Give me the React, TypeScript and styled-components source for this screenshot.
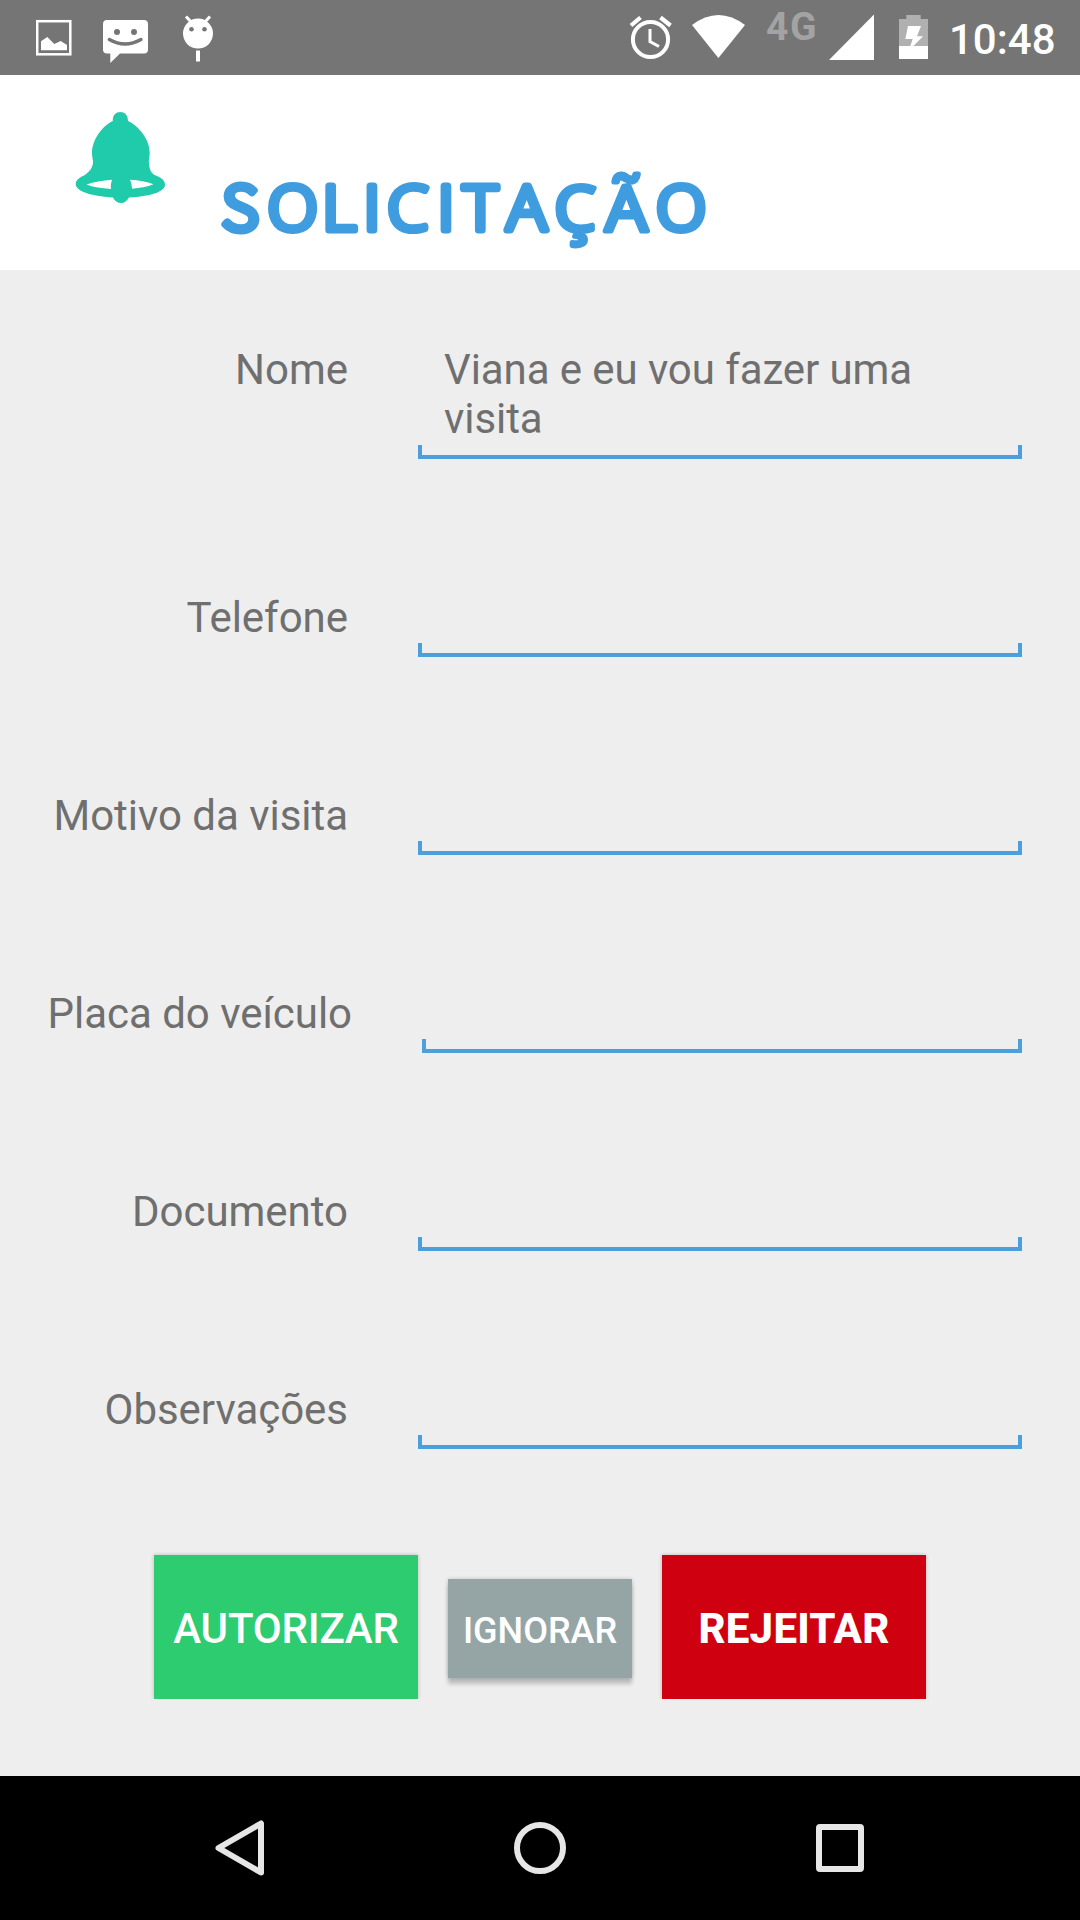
import React from "react";
import styled, { createGlobalStyle } from "styled-components";

const GlobalStyle = createGlobalStyle`
  * { box-sizing: border-box; }
  body { margin: 0; background: #eeeeee; font-family: Roboto, "Noto Sans", sans-serif; }
`;

const Screen = styled.div`
  display: flex;
  flex-direction: column;
  width: 1080px;
  height: 1920px;
  background: #eeeeee;
  overflow: hidden;
`;

const StatusBar = styled.div`
  display: flex;
  justify-content: space-between;
  height: 75px;
  padding: 0 26px 0 36px;
  background: #757575;
`;

const StatusGroup = styled.div`
  display: flex;
  align-items: flex-start;
`;

const StatusIcon = styled.svg<{ $gap?: number }>`
  display: block;
  flex: none;
  height: 75px;
  margin-left: ${(p) => p.$gap ?? 0}px;
`;

const Network = styled.span`
  width: 50px;
  margin: 5px 0 0 21px;
  color: #a3a3a3;
  font-size: 39px;
  font-weight: 700;
  line-height: 44px;
  letter-spacing: 1.5px;
  white-space: nowrap;
`;

const Clock = styled.span`
  width: 105px;
  margin: 15px 0 0 21px;
  color: #ffffff;
  font-size: 42px;
  font-weight: 500;
  line-height: 49px;
  white-space: nowrap;
`;

const Header = styled.header`
  display: flex;
  align-items: flex-start;
  height: 195px;
  padding: 35px 0 0 74px;
  background: #ffffff;
`;

const Bell = styled.svg`
  display: block;
  flex: none;
`;

const Title = styled.h1`
  margin: 45px 0 0 32px;
  height: 110px;
  svg { display: block; }
`;

const TitleText = styled.text`
  font-family: "Open Sans", sans-serif;
  font-size: 61.5px;
  font-weight: 300;
  fill: #3e9cdf;
  stroke: #3e9cdf;
  stroke-width: 7px;
  stroke-linejoin: round;
  stroke-linecap: round;
`;

const Initial = styled.tspan`
  font-family: "Noto Sans CJK JP", sans-serif;
  font-size: 60px;
`;

const Accented = styled.tspan`
  font-size: 63px;
  font-weight: 500;
  stroke-width: 5px;
`;

const Form = styled.main`
  display: flex;
  flex-direction: column;
  flex: 1;
  gap: 134px;
  padding-top: 75px;
`;

const Row = styled.div`
  display: flex;
  padding-right: 58px;
  color: #6f6f6f;
  font-size: 42px;
  line-height: 49px;
`;

const Label = styled.label<{ $width: number }>`
  flex: none;
  width: ${(p) => p.$width}px;
  letter-spacing: -0.03px;
  text-align: right;
  white-space: nowrap;
`;

const Field = styled.div`
  display: flex;
  flex-direction: column;
  flex: 1;
  gap: 1px;
  margin-left: 70px;
`;

const Value = styled.div`
  min-height: 49px;
  padding: 0 60px 0 26px;
  letter-spacing: -0.08px;
  &:not(:empty) { padding-bottom: 1px; }
`;

const Underline = styled.div`
  height: 14px;
  border: 4px solid #4b9fdb;
  border-top: none;
`;

const Actions = styled.div`
  display: flex;
  align-items: flex-start;
  gap: 30px;
  margin-top: -28px;
  padding-left: 154px;
`;

const Action = styled.button<{ $color: string; $weight: number; $spacing?: number }>`
  width: 264px;
  height: 144px;
  padding: 3px 0 0;
  border: none;
  background: ${(p) => p.$color};
  box-shadow: 0 0 4px rgba(0, 0, 0, 0.22);
  clip-path: inset(-3px -6px 0 -6px);
  color: #ffffff;
  font-family: inherit;
  font-size: 42px;
  font-weight: ${(p) => p.$weight};
  letter-spacing: ${(p) => p.$spacing ?? 0}px;
  line-height: 49px;
  text-align: center;
  white-space: nowrap;
`;

const SmallAction = styled(Action)`
  width: 184px;
  height: 99px;
  margin-top: 24px;
  padding: 4px 0 0;
  font-size: 36px;
  line-height: 42px;
  box-shadow: 0 6px 4px rgba(0, 0, 0, 0.2), 0 0 4px rgba(0, 0, 0, 0.18);
  clip-path: none;
`;

const NavBar = styled.nav`
  display: flex;
  justify-content: center;
  height: 144px;
  background: #000000;
`;

const NavButton = styled.div`
  display: flex;
  align-items: center;
  justify-content: center;
  width: 300px;
`;

const fields = [
  { label: "Nome", value: "Viana e eu vou fazer uma visita", width: 348 },
  { label: "Telefone", value: "", width: 348 },
  { label: "Motivo da visita", value: "", width: 348 },
  { label: "Placa do veículo", value: "", width: 352 },
  { label: "Documento", value: "", width: 348 },
  { label: "Observações", value: "", width: 348 },
];

const nav = { fill: "none", stroke: "#e6e6e6", strokeWidth: 6, strokeLinejoin: "round" as const };

export default function App() {
  return (
    <>
      <GlobalStyle />
      <Screen>
        <StatusBar>
          <StatusGroup>
            <StatusIcon width="36" viewBox="36 0 36 75">
              <rect x="37.2" y="21.2" width="33.1" height="33.1" fill="none" stroke="#fff" strokeWidth="2.5" />
              <path d="M41 50.3V41.3L47.3 37L54.3 44L60.7 41L67 45V50.3Z" fill="#fff" />
            </StatusIcon>
            <StatusIcon width="45" viewBox="103 0 45 75" $gap={31}>
              <path d="M107 20H144Q148 20 148 24V49.5Q148 53.5 144 53.5H120L110.3 63V53.5H107Q103 53.5 103 49.5V24Q103 20 107 20Z" fill="#fff" />
              <circle cx="117" cy="32" r="3" fill="#757575" />
              <circle cx="134" cy="32" r="3" fill="#757575" />
              <path d="M109.3 39.5Q125 48.5 141 39.5" fill="none" stroke="#757575" strokeWidth="3.4" strokeLinecap="round" />
            </StatusIcon>
            <StatusIcon width="32" viewBox="182 0 32 75" $gap={34}>
              <circle cx="198" cy="33.6" r="15" fill="#fff" />
              <path d="M186 16.5L192 23M210 16.5L204 23" stroke="#fff" strokeWidth="3" />
              <circle cx="191.5" cy="29.2" r="2.3" fill="#757575" />
              <circle cx="204.5" cy="29.2" r="2.3" fill="#757575" />
              <rect x="196" y="50.5" width="4" height="11" fill="#fff" />
            </StatusIcon>
          </StatusGroup>
          <StatusGroup>
            <StatusIcon width="43" viewBox="629 0 43 75">
              <circle cx="650.5" cy="39.5" r="17.6" fill="none" stroke="#fff" strokeWidth="4" />
              <path d="M631 25.5L640.5 17.5M660.5 17.5L670.5 25.5" stroke="#fff" strokeWidth="4.2" />
              <path d="M650 29V41.5L659 46.5" fill="none" stroke="#fff" strokeWidth="3" />
            </StatusIcon>
            <StatusIcon width="53" viewBox="692 0 53 75" $gap={20}>
              <path d="M692 25Q718.5 5 745 25L718.4 58Z" fill="#fff" />
            </StatusIcon>
            <Network>4G</Network>
            <StatusIcon width="45" viewBox="829 0 45 75" $gap={13}>
              <path d="M829 60L874 14.5V60Z" fill="#fff" />
            </StatusIcon>
            <StatusIcon width="29" viewBox="899 0 29 75" $gap={25}>
              <path d="M899 19H906.3V15H920.7V19H928V59H899Z" fill="#b0b0b0" />
              <path d="M899 46H928V59H899Z" fill="#fff" />
              <path d="M908 26H921L917 36.3H923L913.5 46H910.3L912.7 39H905.3Z" fill="#fff" />
            </StatusIcon>
            <Clock>10:48</Clock>
          </StatusGroup>
        </StatusBar>

        <Header>
          <Bell width="94" height="96" viewBox="74 110 94 96">
            <path
              fillRule="evenodd"
              fill="#1fcbab"
              d="M112.8 121C112.5 115 116 112 120.3 112C124.6 112 128 115 128 121C139 126 150 140 149.7 153C149.5 158 148.5 160 149 163C149.5 171 152 174.500 157 176C162 178 165.2 181 165 185C164.5 192 150 196.500 129 197.500C127 201 124.500 203 121 203C117.500 203 114.500 201 113 197.500C90 196 75.700 191 75.700 184C75.700 180.500 79 177.500 84 175.500C89 172.500 93.500 167 93 161C92.500 158 92 156 92 153C92 140 102 126 112.800 121ZM86.500 184.500C93 187 101 188.300 111 189C110.500 186 111 183 112 179.700C102 180.500 94 181.700 86.500 184.500ZM130 179.700C131.300 182.500 131.800 185.500 132 188.700C140 188 147 187 153.500 184.300C147 181.500 139 180.200 130 179.700Z"
            />
          </Bell>
          <Title>
            <svg width="520" height="110" viewBox="0 155 520 110">
              <TitleText
                transform="scale(1.06 1)"
                y="230.2"
                x="20.6 63.9 115.6 154.6 177 224.4 248.3 289.6 334 382.3 430.5"
              >
                <Initial>S</Initial>OLICITA<Accented dy="0.7">ÇÃ</Accented><tspan dy="-0.7">O</tspan>
              </TitleText>
            </svg>
          </Title>
        </Header>

        <Form>
          {fields.map((f) => (
            <Row key={f.label}>
              <Label $width={f.width}>{f.label}</Label>
              <Field>
                <Value>{f.value}</Value>
                <Underline />
              </Field>
            </Row>
          ))}
          <Actions>
            <Action $color="#2ecc71" $weight={500} $spacing={-0.2}>AUTORIZAR</Action>
            <SmallAction $color="#95a5a6" $weight={500}>IGNORAR</SmallAction>
            <Action $color="#cf000f" $weight={800} $spacing={0.25}>REJEITAR</Action>
          </Actions>
        </Form>

        <NavBar>
          <NavButton>
            <svg width="56" height="60" viewBox="212 1818 56 60">
              <path d="M218.500 1848L261 1823.500V1872.500Z" {...nav} />
            </svg>
          </NavButton>
          <NavButton>
            <svg width="52" height="52" viewBox="514 1822 52 52">
              <circle cx="540" cy="1848" r="23" {...nav} />
            </svg>
          </NavButton>
          <NavButton>
            <svg width="48" height="48" viewBox="816 1824 48 48">
              <rect x="819" y="1827" width="42" height="42" rx="1" {...nav} />
            </svg>
          </NavButton>
        </NavBar>
      </Screen>
    </>
  );
}
